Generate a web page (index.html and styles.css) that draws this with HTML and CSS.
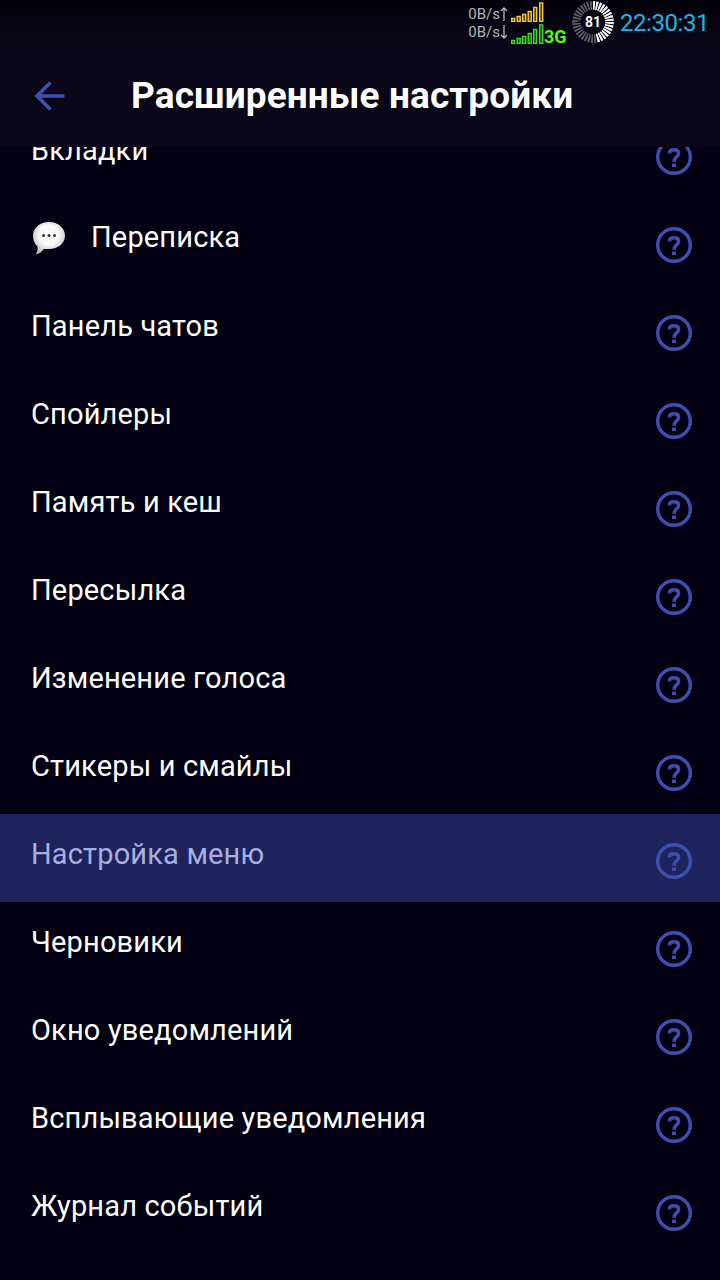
FILE: index.html
```html
<!DOCTYPE html>
<html lang="ru">
<head>
    <meta charset="UTF-8">
    <meta name="viewport" content="width=device-width, initial-scale=1.0">
    <title>Расширенные настройки</title>
    <link rel="stylesheet" href="styles.css">
</head>
<body>
    <svg class="sprite" aria-hidden="true">
        <symbol id="help" viewBox="0 0 36 36">
            <circle cx="18" cy="18" r="16.3" fill="none" stroke="currentColor" stroke-width="3.4"/>
            <path d="M13.4 14.4C13.4 11.8 15.4 10.7 18 10.7C20.8 10.7 22.600 12 22.600 14.400C22.600 17.800 18 18 18 22.800" fill="none" stroke="currentColor" stroke-width="3.4"/>
            <rect x="16" y="24.600" width="4" height="3.400" fill="currentColor"/>
        </symbol>
    </svg>

    <header class="header">
        <div class="status-bar">
            <div class="traffic">
                <span>0B/s<svg class="traffic-arrow" viewBox="0 0 8 16"><path d="M4 15V2M1 5L4 2L7 5"/></svg></span>
                <span>0B/s<svg class="traffic-arrow" viewBox="0 0 8 16"><path d="M4 1V14M1 11L4 14L7 11"/></svg></span>
            </div>
            <div class="signals">
                <svg class="signal signal-yellow" viewBox="0 0 33 20"><path d="M.7 16.5h3v3h-3zM6.2 14.5h3v5h-3zM11.7 12.5h3v7h-3zM17.2 9.5h3v10h-3zM22.7 5.5h3v14h-3zM28.7 1h3v18.5h-3z"/></svg>
                <div class="signal-row">
                    <svg class="signal signal-green" viewBox="0 0 33 20"><path d="M.7 16.5h3v3h-3zM6.2 14.5h3v5h-3zM11.7 12.5h3v7h-3zM17.2 9.5h3v10h-3zM22.7 5.5h3v14h-3zM28.7 1h3v18.5h-3z"/></svg>
                    <span class="network">3G</span>
                </div>
            </div>
            <div class="battery">
                <svg viewBox="0 0 42 42">
                    <circle class="battery-off" cx="21" cy="21" r="16.5" pathLength="72"/>
                    <circle class="battery-on" cx="21" cy="21" r="16.5" pathLength="72"/>
                </svg>
                <span class="battery-level">81</span>
            </div>
            <time class="clock">22:30:31</time>
        </div>
        <div class="toolbar">
            <svg class="back" viewBox="0 0 32 32"><path d="M30.500 16H3M16.500 2.500L3 16L16.500 29.500"/></svg>
            <h1>Расширенные настройки</h1>
        </div>
    </header>

    <main class="settings">
        <ul class="list">
            <li class="item"><span class="label">Вкладки</span><svg class="help"><use href="#help"/></svg></li>
            <li class="item item-icon">
                <svg class="bubble" viewBox="0 0 34 34">
                    <defs>
                        <radialGradient id="shade" cx=".5" cy=".4" r=".6">
                            <stop offset=".5" stop-color="#fafafa"/>
                            <stop offset="1" stop-color="#bcbcbc"/>
                        </radialGradient>
                    </defs>
                    <path d="M17 1C26 1 33 7 33 14.500C33 22.500 26 28 17 28H11.500C10 31 7 33 3.500 33.500C5 31.500 6 29 5.500 25.500C2.500 23 1 19 1 14.500C1 7 8 1 17 1Z" fill="url(#shade)"/>
                    <g fill="#333"><circle cx="11.500" cy="14.500" r="1.500"/><circle cx="17" cy="14.500" r="1.500"/><circle cx="22.500" cy="14.500" r="1.500"/></g>
                </svg>
                <span class="label">Переписка</span><svg class="help"><use href="#help"/></svg>
            </li>
            <li class="item"><span class="label">Панель чатов</span><svg class="help"><use href="#help"/></svg></li>
            <li class="item"><span class="label">Спойлеры</span><svg class="help"><use href="#help"/></svg></li>
            <li class="item"><span class="label">Память и кеш</span><svg class="help"><use href="#help"/></svg></li>
            <li class="item"><span class="label">Пересылка</span><svg class="help"><use href="#help"/></svg></li>
            <li class="item"><span class="label">Изменение голоса</span><svg class="help"><use href="#help"/></svg></li>
            <li class="item"><span class="label">Стикеры и смайлы</span><svg class="help"><use href="#help"/></svg></li>
            <li class="item item-active"><span class="label">Настройка меню</span><svg class="help"><use href="#help"/></svg></li>
            <li class="item"><span class="label">Черновики</span><svg class="help"><use href="#help"/></svg></li>
            <li class="item"><span class="label">Окно уведомлений</span><svg class="help"><use href="#help"/></svg></li>
            <li class="item"><span class="label">Всплывающие уведомления</span><svg class="help"><use href="#help"/></svg></li>
            <li class="item"><span class="label">Журнал событий</span><svg class="help"><use href="#help"/></svg></li>
        </ul>
    </main>
</body>
</html>
```
FILE: styles.css
```css
* {
    box-sizing: border-box;
}

body {
    display: flex;
    flex-direction: column;
    height: 100vh;
    margin: 0;
    overflow: hidden;
    background-color: #020012;
    color: #fff;
    font-family: Roboto, sans-serif;
}

svg {
    display: block;
    flex: none;
}

.sprite {
    display: none;
}

.header {
    flex: none;
    height: 147px;
    background: linear-gradient(#020109, #0a071a 50px);
}

/* Status bar */
.status-bar {
    display: flex;
    justify-content: flex-end;
    height: 48px;
    padding-right: 11px;
}

.traffic {
    display: flex;
    flex-direction: column;
    padding-top: 5px;
    color: #b5b4ba;
    font-size: 15px;
    line-height: 18px;
}

.traffic span {
    display: flex;
    align-items: center;
}

.traffic-arrow {
    width: 8px;
    height: 16px;
    fill: none;
    stroke: currentColor;
    stroke-width: 1.3;
}

.signals {
    width: 57px;
    margin-left: 3px;
    padding-top: 2px;
}

.signal {
    width: 33px;
    height: 20px;
    stroke-width: 1.4;
}

.signal-yellow {
    fill: #4b3a08;
    stroke: #f5c92b;
}

.signal-green {
    fill: #0d4a0c;
    stroke: #3be01c;
}

.signal-row {
    display: flex;
    padding-top: 2px;
}

.network {
    color: #52fb10;
    font-size: 18px;
    font-weight: 700;
    line-height: 26px;
}

.battery {
    display: grid;
    width: 42px;
    height: 42px;
    margin: 1px 6px 0 4px;
    place-items: center;
}

.battery svg,
.battery-level {
    grid-area: 1 / 1;
}

.battery svg {
    width: 42px;
    height: 42px;
}

.battery circle {
    fill: none;
    stroke-width: 8.5;
    transform: rotate(-90deg);
    transform-origin: center;
}

.battery-off {
    stroke: #5a5863;
    stroke-dasharray: 1.3 .7;
}

.battery-on {
    stroke: #fff;
    stroke-dasharray: 1.3 .7 1.3 .7 1.3 .7 1.3 .7 1.3 .7 1.3 .7 1.3 .7 1.3 .7 1.3 .7 1.3 .7 1.3 .7 1.3 .7 1.3 .7 1.3 .7 1.3 .7 1.3 .7 1.3 38.7;
}

.battery-level {
    font-size: 14px;
    font-weight: 700;
    line-height: 42px;
}

.clock {
    color: #1eb4e6;
    font-size: 24px;
    line-height: 46px;
    letter-spacing: -.45px;
}

/* Toolbar */
.toolbar {
    display: flex;
    align-items: center;
    height: 96px;
    padding-left: 34px;
}

.back {
    width: 32px;
    height: 32px;
    fill: none;
    stroke: #3f4fb0;
    stroke-width: 3.6;
}

h1 {
    margin: 0 0 0 65px;
    font-size: 37px;
    font-weight: 700;
    line-height: 44px;
    letter-spacing: .1px;
}

/* Settings list */
.settings {
    flex: 1;
    min-height: 0;
    overflow: hidden;
}

/* Scrolled, the first row is partly under the header */
.list {
    margin: -37px 0 0;
    padding: 0;
    list-style: none;
}

.item {
    display: flex;
    height: 88px;
    padding: 22px 28px 0 31px;
}

.label {
    flex: 1;
    padding-top: 1px;
    font-size: 29px;
    line-height: 34px;
    letter-spacing: .16px;
}

.help {
    width: 36px;
    height: 36px;
    margin-top: 7px;
    color: #3f4fb0;
}

.item-icon .label {
    padding-top: 0;
}

.bubble {
    width: 34px;
    height: 34px;
    margin: 1px 25px 0 1px;
}

.item-active {
    background-color: #1e245b;
}

.item-active .label {
    color: #a6afe0;
}
```
